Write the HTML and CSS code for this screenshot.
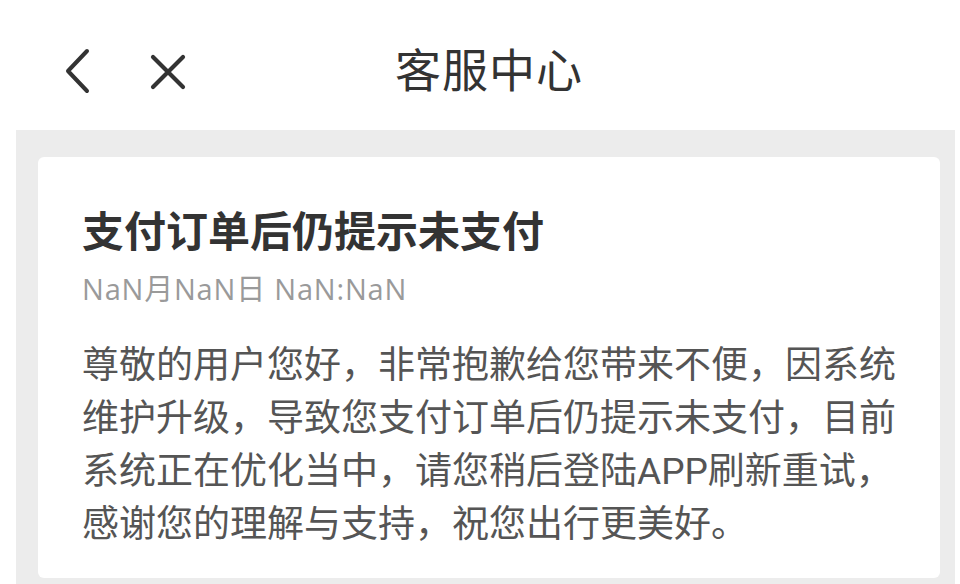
FILE: index.html
```html
<!DOCTYPE html>
<html lang="zh-CN">
<head>
<meta charset="utf-8">
<title>客服中心</title>
<link rel="stylesheet" href="styles.css">
</head>
<body>
<div class="page">
  <header class="topbar">
    <div class="nav-icons">
      <svg class="icon-back" width="30" height="46" viewBox="0 0 30 46"><path d="M25 3 L6 23 L25 43" fill="none" stroke="#333" stroke-width="4" stroke-linecap="round" stroke-linejoin="round"/></svg>
      <svg class="icon-close" width="36" height="36" viewBox="0 0 36 36"><path d="M3 3 L33 33 M33 3 L3 33" fill="none" stroke="#333" stroke-width="4.2" stroke-linecap="round"/></svg>
    </div>
    <h1 class="title">客服中心</h1>
  </header>
  <main class="content">
    <section class="card">
      <h2 class="card-title">支付订单后仍提示未支付</h2>
      <div class="card-date">NaN月NaN日 NaN:NaN</div>
      <p class="card-body">尊敬的用户您好，非常抱歉给您带来不便，因系统<br>维护升级，导致您支付订单后仍提示未支付，目前<br>系统正在优化当中，请您稍后登陆APP刷新重试，<br>感谢您的理解与支持，祝您出行更美好。</p>
    </section>
  </main>
</div>
</body>
</html>
```
FILE: styles.css
```css
html, body {
  margin: 0;
  padding: 0;
  background: #fff;
}
body {
  width: 960px;
  height: 584px;
  overflow: hidden;
  font-family: "Roboto", "Noto Sans CJK SC", sans-serif;
}
.page {
  display: flex;
  flex-direction: column;
  height: 584px;
}
.topbar {
  height: 130px;
  position: relative;
  display: flex;
  align-items: center;
  justify-content: center;
}
.nav-icons {
  position: absolute;
  left: 62px;
  top: 48px;
  display: flex;
  align-items: center;
  gap: 58px;
}
.icon-close {
  margin-top: 2px;
}
.title {
  margin: 0;
  font-size: 46px;
  font-weight: 400;
  color: #333;
  letter-spacing: 1px;
  margin-left: 18px;
  margin-top: 4px;
}
.content {
  flex: 1;
  margin: 0 5px 0 16px;
  background: #ececec;
  padding: 27px 15px 6px 22px;
  display: flex;
  flex-direction: column;
}
.card {
  flex: 1;
  background: #fff;
  border-radius: 6px;
  padding: 48px 40px 20px 44px;
  box-sizing: border-box;
}
.card-title {
  margin: 0;
  font-size: 42px;
  font-weight: 700;
  color: #333;
  line-height: 56px;
}
.card-date {
  margin-top: 10px;
  font-family: "Open Sans", "Noto Sans CJK SC", sans-serif;
  font-size: 29px;
  letter-spacing: 0.8px;
  color: #9a9a9a;
  line-height: 36px;
}
.card-body {
  margin: 32px 0 0;
  font-size: 37px;
  line-height: 53px;
  color: #555;
  white-space: nowrap;
}
```
